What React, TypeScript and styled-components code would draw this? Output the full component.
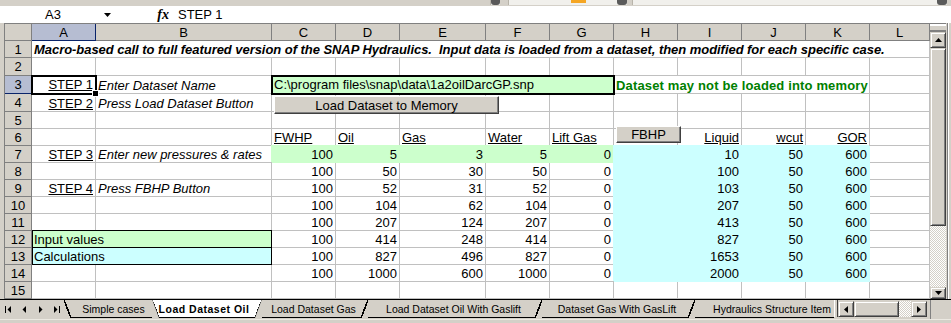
import React from 'react';
import styled, { createGlobalStyle, css } from 'styled-components';

const FACE = '#D4D0C8';
const SHADOW = '#808080';
const DARK = '#404040';
const GRID = '#C0C0C0';
const GREEN = '#CCFFCC';
const CYAN = '#CCFFFF';
const SELECT = '#B6BDD2';
const NAVY = '#0A246A';

const COLS = ['A', 'B', 'C', 'D', 'E', 'F', 'G', 'H', 'I', 'J', 'K', 'L'];
const COL_W = [64, 176, 64, 64, 86, 64, 64, 64, 64, 64, 64, 60];
const ROW_H = [17, 18, 18, 18, 17, 17, 17, 17, 17, 17, 17, 17, 17, 17, 17];

const TITLE =
  'Macro-based call to full featured version of the SNAP Hydraulics.  Input data is loaded from a dataset, then modified for each specific case.';
const PATH = 'C:\\program files\\snap\\data\\1a2oilDarcGP.snp';

const inputs = [
  [100, 5, 3, 5, 0],
  [100, 50, 30, 50, 0],
  [100, 52, 31, 52, 0],
  [100, 104, 62, 104, 0],
  [100, 207, 124, 207, 0],
  [100, 414, 248, 414, 0],
  [100, 827, 496, 827, 0],
  [100, 1000, 600, 1000, 0],
];

const calcs = [
  [10, 50, 600],
  [100, 50, 600],
  [103, 50, 600],
  [207, 50, 600],
  [413, 50, 600],
  [827, 50, 600],
  [1653, 50, 600],
  [2000, 50, 600],
];

const steps: Record<number, [string, string]> = {
  3: ['STEP 1', 'Enter Dataset Name'],
  4: ['STEP 2', 'Press Load Dataset Button'],
  7: ['STEP 3', 'Enter new pressures & rates'],
  9: ['STEP 4', 'Press FBHP Button'],
};

type Align = 'left' | 'right';
type Box = 'thin' | 'thick' | 'select';

interface CellSpec {
  col: number;
  span?: number;
  text?: string | number;
  align?: Align;
  italic?: boolean;
  bold?: boolean;
  underline?: boolean;
  fill?: string;
  color?: string;
  box?: Box;
  tracking?: number;
}

const GlobalStyle = createGlobalStyle`
  html, body {
    margin: 0;
    padding: 0;
    background: ${FACE};
  }
  body {
    font-family: "Liberation Sans", Arial, sans-serif;
    font-size: 13px;
    color: #000;
  }
`;

const Window = styled.div`
  width: 951px;
  height: 323px;
  overflow: hidden;
  display: flex;
  flex-direction: column;
  background: ${FACE};
`;

const ToolbarEdge = styled.div`
  height: 6px;
  display: flex;
  align-items: flex-start;
`;

const ComboStub = styled.div<{ $ml: number; $w: number }>`
  margin-left: ${p => p.$ml}px;
  width: ${p => p.$w}px;
  height: 5px;
  display: flex;
  background: #f1f0ec;
  border-left: 1px solid #b8b4aa;
  box-sizing: border-box;
`;

const ComboArrow = styled.div`
  margin-left: auto;
  width: 10px;
  height: 5px;
  background: #5a5a5a;
  border-radius: 0 0 3px 3px;
`;

const Swatch = styled.div`
  margin: 0 0 0 62px;
  width: 15px;
  height: 3px;
  background: #f5a623;
`;

const FormulaBar = styled.div`
  height: 17px;
  display: flex;
  align-items: center;
  background: #fff;
`;

const NameBox = styled.div`
  width: 100px;
  padding-left: 6px;
  box-sizing: border-box;
  text-align: center;
`;

const NameArrow = styled.div`
  width: 14px;
  display: flex;
  justify-content: center;
`;

const FxLabel = styled.div`
  width: 58px;
  padding-right: 3px;
  box-sizing: border-box;
  text-align: right;
  font-family: "Liberation Serif", "Times New Roman", serif;
  font-style: italic;
  font-weight: bold;
  font-size: 14px;
`;

const FormulaText = styled.div`
  flex: 1;
  padding-left: 6px;
`;

const SheetArea = styled.div`
  height: 276px;
  display: flex;
`;

const Gutter = styled.div`
  width: 4px;
`;

const Grid = styled.div`
  position: relative;
  width: 926px;
  box-sizing: border-box;
  border-top: 1px solid ${SHADOW};
  border-left: 1px solid ${SHADOW};
  background: #fff;
  display: grid;
  grid-template-columns: 27px ${COL_W.map(w => `${w}px`).join(' ')};
  grid-template-rows: 17px ${ROW_H.map(h => `${h}px`).join(' ')};
`;

const Corner = styled.div`
  background: ${FACE};
  border-right: 1px solid ${SHADOW};
  border-bottom: 1px solid ${SHADOW};
`;

const ColHeader = styled.div<{ $selected?: boolean }>`
  box-sizing: border-box;
  display: flex;
  align-items: center;
  justify-content: center;
  background: ${p => (p.$selected ? SELECT : FACE)};
  border-right: 1px solid ${p => (p.$selected ? NAVY : SHADOW)};
  border-bottom: 1px solid ${p => (p.$selected ? NAVY : SHADOW)};
`;

const RowHeader = styled.div<{ $selected?: boolean }>`
  box-sizing: border-box;
  display: flex;
  align-items: center;
  justify-content: center;
  background: ${p => (p.$selected ? SELECT : FACE)};
  border-right: 1px solid ${p => (p.$selected ? NAVY : SHADOW)};
  border-bottom: 1px solid ${p => (p.$selected ? NAVY : SHADOW)};
`;

const Cell = styled.div<{
  $span: number;
  $align: Align;
  $italic?: boolean;
  $bold?: boolean;
  $underline?: boolean;
  $fill?: string;
  $color?: string;
  $box?: Box;
  $tracking?: number;
}>`
  grid-column: span ${p => p.$span};
  box-sizing: border-box;
  min-width: 0;
  display: flex;
  align-items: flex-end;
  justify-content: ${p => (p.$align === 'right' ? 'flex-end' : 'flex-start')};
  padding: 0 2px;
  line-height: 15px;
  white-space: pre;
  border-right: 1px solid ${GRID};
  border-bottom: 1px solid ${GRID};
  color: ${p => p.$color ?? '#000'};
  font-style: ${p => (p.$italic ? 'italic' : 'normal')};
  font-weight: ${p => (p.$bold ? 'bold' : 'normal')};
  text-decoration: ${p => (p.$underline ? 'underline' : 'none')};
  letter-spacing: ${p => p.$tracking ?? 0}px;

  ${p =>
    p.$fill &&
    css`
      background: ${p.$fill};
      border-color: ${p.$fill};
      box-shadow: -1px -1px 0 ${p.$fill};
    `}

  ${p =>
    p.$box === 'thin' &&
    css`
      position: relative;
      z-index: 1;
      margin-top: -1px;
      border: 1px solid #000;
      box-shadow: none;
      padding-left: 1px;
    `}

  ${p =>
    p.$box === 'thick' &&
    css`
      position: relative;
      z-index: 1;
      margin: -1px;
      border: 2px solid #000;
      box-shadow: none;
      padding-left: 1px;
      padding-bottom: 1px;
    `}

  ${p =>
    p.$box === 'select' &&
    css`
      position: relative;
      z-index: 2;
      margin: -1px;
      border: 2px solid #000;
      padding-bottom: 1px;

      &::after {
        content: '';
        position: absolute;
        right: -4px;
        bottom: -4px;
        width: 5px;
        height: 5px;
        background: #000;
        border: 1px solid #fff;
      }
    `}
`;

const SheetButton = styled.div<{ $left: number; $top: number; $w: number; $h: number }>`
  position: absolute;
  z-index: 3;
  left: ${p => p.$left}px;
  top: ${p => p.$top}px;
  width: ${p => p.$w}px;
  height: ${p => p.$h}px;
  box-sizing: border-box;
  display: flex;
  align-items: center;
  justify-content: center;
  background: ${FACE};
  border: 1px solid;
  border-color: #fff ${DARK} ${DARK} #fff;
  box-shadow: inset -1px -1px ${SHADOW};
`;

const VScroll = styled.div`
  width: 16px;
  display: flex;
  flex-direction: column;
  border-top: 1px solid ${SHADOW};
`;

const VSplit = styled.div`
  height: 8px;
  box-sizing: border-box;
  background: ${FACE};
  border-top: 2px solid #fff;
  border-bottom: 2px solid ${SHADOW};
`;

const ScrollBtn = styled.div<{ $w?: number; $h?: number }>`
  width: ${p => p.$w ?? 16}px;
  height: ${p => p.$h ?? 16}px;
  flex-shrink: 0;
  box-sizing: border-box;
  display: flex;
  align-items: center;
  justify-content: center;
  background: ${FACE};
  border: 1px solid;
  border-color: ${FACE} ${DARK} ${DARK} ${FACE};
  box-shadow: inset 1px 1px #fff, inset -1px -1px ${SHADOW};
`;

const Track = styled.div`
  flex: 1;
  background: repeating-conic-gradient(#fff 0 25%, ${FACE} 0 50%) 0 0 / 2px 2px;
`;

const RightEdge = styled.div`
  width: 5px;
  box-shadow: inset 1px 0 ${FACE}, inset 2px 0 ${SHADOW}, inset 3px 0 #fff;
`;

const TabBar = styled.div`
  height: 20px;
  box-sizing: border-box;
  display: flex;
  align-items: flex-start;
  border-top: 1px solid #000;
  font-size: 10.5px;
`;

const NavArea = styled.div`
  width: 64px;
  height: 17px;
  display: flex;
`;

const NavBtn = styled.div`
  width: 16px;
  height: 17px;
  display: flex;
  align-items: center;
  justify-content: center;
  padding-top: 2px;
  box-sizing: border-box;
`;

const TabStrip = styled.div`
  flex: 1;
  min-width: 0;
  overflow: hidden;
  display: flex;
  align-items: flex-start;
`;

const Slant = styled.span<{ $dir: 'back' | 'fwd' }>`
  width: 7px;
  height: 18px;
  flex-shrink: 0;
  background: linear-gradient(
    ${p => (p.$dir === 'back' ? 'to top right' : 'to bottom right')},
    transparent calc(50% - 0.8px),
    #000 calc(50% - 0.8px),
    #000 calc(50% + 0.8px),
    transparent calc(50% + 0.8px)
  );
`;

const TabLabel = styled.div<{ $w: number; $active?: boolean }>`
  width: ${p => p.$w}px;
  height: 18px;
  flex-shrink: 0;
  box-sizing: border-box;
  display: flex;
  align-items: center;
  justify-content: center;
  padding: ${p => (p.$active ? '1px 6px 0 0' : '1px 0 0 4px')};
  border-bottom: 1px solid #000;
  white-space: nowrap;
  font-weight: ${p => (p.$active ? 'bold' : 'normal')};
  letter-spacing: ${p => (p.$active ? '0.5px' : '0')};
`;

const ActiveTab = styled.div`
  display: flex;
  margin-top: -1px;
  padding-top: 1px;
  background: #fff;
  clip-path: polygon(0 0, 100% 0, calc(100% - 7px) 100%, 7px 100%);
`;

const SplitBox = styled.div`
  width: 4px;
  height: 17px;
  box-sizing: border-box;
  background: ${FACE};
  border-left: 1px solid #fff;
  border-right: 1px solid ${DARK};
`;

const HScroll = styled.div`
  width: 89px;
  display: flex;
  margin-top: 1px;
`;

const HTrack = styled(Track)`
  flex: none;
  width: 12px;
  height: 16px;
`;

const SizeCorner = styled.div`
  margin-left: 3px;
  width: 21px;
  height: 19px;
  box-shadow: inset 1px 0 ${SHADOW};
`;

const StatusStrip = styled.div`
  flex: 1;
  background: ${FACE};
  border-top: 1px solid #ece9e2;
`;

function Arrow({ dir }: { dir: 'up' | 'down' | 'left' | 'right' }) {
  const vertical = dir === 'up' || dir === 'down';
  const points = {
    up: '3.5,0 7,4 0,4',
    down: '0,0 7,0 3.5,4',
    left: '4,0 4,7 0,3.5',
    right: '0,0 0,7 4,3.5',
  }[dir];
  return (
    <svg width={vertical ? 7 : 4} height={vertical ? 4 : 7} viewBox={vertical ? '0 0 7 4' : '0 0 4 7'}>
      <polygon points={points} fill="#000" />
    </svg>
  );
}

function NavIcon({ kind }: { kind: 'first' | 'prev' | 'next' | 'last' }) {
  return (
    <svg width="7" height="7" viewBox="0 0 7 7">
      {kind === 'first' && (
        <>
          <rect x="0" y="0" width="1" height="7" fill="#000" />
          <polygon points="6,0 6,7 2.5,3.5" fill="#000" />
        </>
      )}
      {kind === 'prev' && <polygon points="5,0 5,7 1.5,3.5" fill="#000" />}
      {kind === 'next' && <polygon points="2,0 2,7 5.5,3.5" fill="#000" />}
      {kind === 'last' && (
        <>
          <polygon points="1,0 1,7 4.5,3.5" fill="#000" />
          <rect x="6" y="0" width="1" height="7" fill="#000" />
        </>
      )}
    </svg>
  );
}

function rowSpecs(r: number): CellSpec[] {
  const cells: CellSpec[] = [];
  if (r === 1) cells.push({ col: 1, span: 12, text: TITLE, bold: true, italic: true, tracking: -0.05 });
  if (steps[r]) {
    cells.push({ col: 1, text: steps[r][0], align: 'right', underline: true, box: r === 3 ? 'select' : undefined });
    cells.push({ col: 2, text: steps[r][1], italic: true });
  }
  if (r === 3) {
    cells.push({ col: 3, span: 5, text: PATH, fill: GREEN, box: 'thick' });
    cells.push({
      col: 8,
      span: 4,
      text: 'Dataset may not be loaded into memory',
      bold: true,
      color: '#008000',
      tracking: 0.15,
    });
  }
  if (r === 6) {
    ['FWHP', 'Oil', 'Gas', 'Water', 'Lift Gas'].forEach((t, k) => cells.push({ col: 3 + k, text: t, underline: true }));
    ['Liquid', 'wcut', 'GOR'].forEach((t, k) => cells.push({ col: 9 + k, text: t, underline: true, align: 'right' }));
  }
  if (r === 12) cells.push({ col: 1, span: 2, text: 'Input values', fill: GREEN, box: 'thin' });
  if (r === 13) cells.push({ col: 1, span: 2, text: 'Calculations', fill: CYAN, box: 'thin' });
  if (r >= 7 && r <= 14) {
    const i = r - 7;
    inputs[i].forEach((v, k) =>
      cells.push({ col: 3 + k, text: v, align: 'right', fill: r === 7 ? GREEN : undefined }),
    );
    cells.push({ col: 8, fill: CYAN });
    calcs[i].forEach((v, k) => cells.push({ col: 9 + k, text: v, align: 'right', fill: CYAN }));
  }
  return cells.sort((a, b) => a.col - b.col);
}

function SheetRow({ r }: { r: number }) {
  const specs = rowSpecs(r);
  const out: React.ReactNode[] = [];
  let c = 1;
  while (c <= 12) {
    const s = specs.find(x => x.col === c);
    const span = s?.span ?? 1;
    out.push(
      <Cell
        key={c}
        $span={span}
        $align={s?.align ?? 'left'}
        $italic={s?.italic}
        $bold={s?.bold}
        $underline={s?.underline}
        $fill={s?.fill}
        $color={s?.color}
        $box={s?.box}
        $tracking={s?.tracking}
      >
        {s?.text !== undefined ? <span>{s.text}</span> : null}
      </Cell>,
    );
    c += span;
  }
  return (
    <>
      <RowHeader $selected={r === 3}>{r}</RowHeader>
      {out}
    </>
  );
}

export default function App() {
  return (
    <>
      <GlobalStyle />
      <Window>
        <ToolbarEdge>
          <ComboStub $ml={490} $w={10}>
            <ComboArrow />
          </ComboStub>
          <ComboStub $ml={8} $w={119}>
            <Swatch />
            <ComboArrow />
          </ComboStub>
          <ComboStub $ml={5} $w={315}>
            <ComboArrow />
          </ComboStub>
        </ToolbarEdge>

        <FormulaBar>
          <NameBox>A3</NameBox>
          <NameArrow>
            <Arrow dir="down" />
          </NameArrow>
          <FxLabel>fx</FxLabel>
          <FormulaText>STEP 1</FormulaText>
        </FormulaBar>

        <SheetArea>
          <Gutter />
          <Grid>
            <Corner />
            {COLS.map(c => (
              <ColHeader key={c} $selected={c === 'A'}>
                {c}
              </ColHeader>
            ))}
            {ROW_H.map((_, i) => (
              <SheetRow key={i} r={i + 1} />
            ))}
            <SheetButton $left={269} $top={72} $w={225} $h={18}>
              Load Dataset to Memory
            </SheetButton>
            <SheetButton $left={611} $top={102} $w={65} $h={17}>
              FBHP
            </SheetButton>
          </Grid>
          <VScroll>
            <VSplit />
            <ScrollBtn>
              <Arrow dir="up" />
            </ScrollBtn>
            <ScrollBtn $h={178} />
            <Track />
            <ScrollBtn $h={12}>
              <Arrow dir="down" />
            </ScrollBtn>
          </VScroll>
          <RightEdge />
        </SheetArea>

        <TabBar>
          <NavArea>
            <NavBtn>
              <NavIcon kind="first" />
            </NavBtn>
            <NavBtn>
              <NavIcon kind="prev" />
            </NavBtn>
            <NavBtn>
              <NavIcon kind="next" />
            </NavBtn>
            <NavBtn>
              <NavIcon kind="last" />
            </NavBtn>
          </NavArea>
          <TabStrip>
            <Slant $dir="back" />
            <TabLabel $w={81}>Simple cases</TabLabel>
            <ActiveTab>
              <Slant $dir="back" />
              <TabLabel $w={96} $active>
                Load Dataset Oil
              </TabLabel>
              <Slant $dir="fwd" />
            </ActiveTab>
            <TabLabel $w={99}>Load Dataset Gas</TabLabel>
            <Slant $dir="fwd" />
            <TabLabel $w={167}>Load Dataset Oil With Gaslift</TabLabel>
            <Slant $dir="fwd" />
            <TabLabel $w={146}>Dataset Gas With GasLift</TabLabel>
            <Slant $dir="fwd" />
            <TabLabel $w={150}>Hydraulics Structure Item</TabLabel>
          </TabStrip>
          <SplitBox />
          <HScroll>
            <ScrollBtn>
              <Arrow dir="left" />
            </ScrollBtn>
            <ScrollBtn $w={45} />
            <HTrack />
            <ScrollBtn>
              <Arrow dir="right" />
            </ScrollBtn>
          </HScroll>
          <SizeCorner />
        </TabBar>
        <StatusStrip />
      </Window>
    </>
  );
}
